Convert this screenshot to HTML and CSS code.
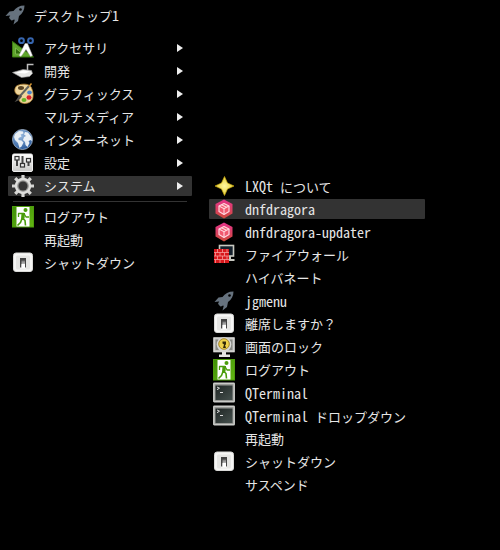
FILE: index.html
```html
<!DOCTYPE html>
<html lang="ja">
<head>
    <meta charset="UTF-8">
    <meta name="viewport" content="width=device-width, initial-scale=1.0">
    <title>デスクトップ1</title>
    <link rel="stylesheet" href="styles.css">
</head>
<body>

    <!-- Icon set -->
    <svg class="icon-set" aria-hidden="true">
        <defs>
            <linearGradient id="metal" x1="0" y1="0" x2="0" y2="1">
                <stop offset="0" stop-color="#ffffff"/>
                <stop offset="1" stop-color="#c9c9c7"/>
            </linearGradient>
            <linearGradient id="pink" x1="0" y1="0" x2="0" y2="1">
                <stop offset="0" stop-color="#e5358b"/>
                <stop offset="1" stop-color="#cf4a3c"/>
            </linearGradient>
            <linearGradient id="green" x1="0" y1="0" x2="1" y2="1">
                <stop offset="0" stop-color="#3f8f06"/>
                <stop offset="1" stop-color="#62b512"/>
            </linearGradient>
            <linearGradient id="knob" x1="0" y1="0" x2="0" y2="1">
                <stop offset="0" stop-color="#777"/>
                <stop offset="1" stop-color="#fff"/>
            </linearGradient>
            <linearGradient id="screen" x1="0" y1="0" x2="1" y2="1">
                <stop offset="0" stop-color="#202625"/>
                <stop offset="1" stop-color="#45504d"/>
            </linearGradient>
            <radialGradient id="sea" cx=".4" cy=".3" r=".7">
                <stop offset="0" stop-color="#9bbce0"/>
                <stop offset="1" stop-color="#2c5c9d"/>
            </radialGradient>
            <radialGradient id="gold">
                <stop offset="0" stop-color="#fff7a0"/>
                <stop offset="1" stop-color="#e3cb32"/>
            </radialGradient>
        </defs>

        <symbol id="rocket" viewBox="0 0 22 22">
            <path fill="#66727e" d="M20.500 1.500c-5 0-8.500 2-11 5.500L5.500 7.500 1.500 12l4.500-.5 1 .7-1.500 2.300 2 2 2.300-1.500.9 1.100L9.500 20.500l4.500-3.500 1-5c3.500-2.500 5.500-6 5.500-10.500z"/>
            <path fill="#66727e" d="M8.500 8l5 5.500-5.500 3-3-3z"/>
            <circle cx="16.500" cy="5.500" r="1.300" fill="#000"/>
        </symbol>

        <symbol id="accessories" viewBox="0 0 22 22">
            <path fill="#5fa52c" stroke="#3b7b10" d="M.5 4.500v15.500h21z"/>
            <path fill="#2f6b0c" stroke="#8fc960" stroke-width=".7" d="M3.500 11v6h7z"/>
            <path fill="#fff" stroke="#aaa" stroke-width=".5" d="M13 6.500h2.500L20.500 18.500l-2 1-4.500-7-5 7-2-1z"/>
            <g fill="none" stroke="#3766b0" stroke-width="2">
                <circle cx="9.500" cy="3.700" r="2.400"/>
                <circle cx="18.500" cy="3.700" r="2.400"/>
            </g>
        </symbol>

        <symbol id="trowel" viewBox="0 0 22 22">
            <path fill="none" stroke="#bdbdbd" stroke-width="1.500" d="M21.500 4.500h-6v6"/>
            <path fill="#e7e7e5" stroke="#999" stroke-width=".6" d="M.5 12.500L11 9.500l8.500 1 1 3-3 3-8 1z"/>
            <path fill="#fff" d="M4 12.700l7.500-2.200 6.500 1-5 2z"/>
        </symbol>

        <symbol id="palette" viewBox="0 0 22 22">
            <path fill="#eed59c" stroke="#b98838" stroke-width=".8" d="M4 3.500C7 .5 17 0 19 4c1.500 3 2.500 6 2 10-.5 5-6 7.500-11 6-4-1.500-3.500-5-2-8-4 .5-7-4-4-8.500z"/>
            <ellipse cx="9" cy="5" rx="3" ry="1.900" fill="#5b4524"/>
            <ellipse cx="17.500" cy="9.500" rx="2.300" ry="2.100" fill="#4b85cb"/>
            <ellipse cx="17" cy="14.500" rx="2.500" ry="2.300" fill="#d8242d"/>
            <ellipse cx="12" cy="17" rx="2.500" ry="2.100" fill="#68b529"/>
            <path stroke="#62645f" stroke-width="2" d="M17 3L8 13"/>
            <path stroke="#d39535" stroke-width="1.500" d="M19.500.5L17 3.500"/>
            <path fill="#55524d" d="M8 11.500l2 2c-2 3-4.500 5-7.500 5.500 2-1.500 3-5 5.500-7.500z"/>
        </symbol>

        <symbol id="globe" viewBox="0 0 22 22">
            <circle cx="10.500" cy="10.500" r="10" fill="url(#sea)" stroke="#a9bed6" stroke-width=".8"/>
            <path fill="#e9eff5" d="M3 5l4-3 4 .5.5 2-3 1 1 2-3 1.500v2l3 .5 2 2-2 4-2 1.500-1.500-5L3 11l-1-3zM13 3l3 .5 3.500 4.500.5 4-1.500-1-2 1 1 2-2 4-2-2-.5-3-2-2 1-3 2-1-2-1.500z"/>
        </symbol>

        <symbol id="sliders" viewBox="0 0 22 22">
            <rect x=".5" y="2" width="20" height="17.500" rx="1.500" fill="url(#metal)" stroke="#eee"/>
            <g fill="none" stroke="#444" stroke-width="2">
                <path d="M5 6v8M10.500 4v8M16.500 8v6"/>
            </g>
            <g fill="#eee" stroke="#333" stroke-width="1.200">
                <rect x="3" y="4.500" width="4" height="3.500"/>
                <rect x="8.500" y="11.500" width="4" height="3.500"/>
                <rect x="14.500" y="6.500" width="4" height="3.500"/>
            </g>
        </symbol>

        <symbol id="gear" viewBox="0 0 22 22">
            <g stroke="#d5d5d3" stroke-width="3.200">
                <path d="M11 0v22M0 11h22M3.200 3.200l15.600 15.600M18.800 3.200L3.200 18.800"/>
            </g>
            <circle cx="11" cy="11" r="8.200" fill="#dededc"/>
            <circle cx="11" cy="11" r="5.800" fill="#929290"/>
            <circle cx="11" cy="11" r="4.500" fill="#353535"/>
        </symbol>

        <symbol id="exit" viewBox="0 0 22 22">
            <rect x=".5" y=".5" width="21" height="20.500" fill="url(#green)" stroke="#4d9b0c"/>
            <path fill="#fff" d="M4.500 1h13v19.500h-13z"/>
            <circle cx="13.500" cy="4" r="2" fill="#4a9d0b"/>
            <path fill="none" stroke="#4a9d0b" stroke-width="1.300" stroke-linejoin="round" d="M6.500 11V7.500H12l2 3.500h3"/>
            <path fill="#4a9d0b" d="M9.500 7h3.500l-.5 5.500-3.500 1z"/>
            <path fill="none" stroke="#4a9d0b" stroke-width="1.600" stroke-linejoin="round" d="M10.500 12l2.500 2.500.5 5M10 12.500L8.500 16.500 5.500 19.500"/>
        </symbol>

        <symbol id="switch" viewBox="0 0 22 22">
            <rect x="1.500" y="1" width="19" height="18.500" rx="2.500" fill="#f6f6f5" stroke="#d9d9d7"/>
            <rect x="4" y="3.500" width="14" height="14" rx="1.500" fill="#e5e5e3"/>
            <rect x="8" y="6" width="6" height="10" fill="#444"/>
            <path fill="url(#knob)" d="M9.500 8.500h3.500V15.500H9.500z"/>
            <path fill="#fff" d="M9.500 12h3.500v3.500H9.500zM8 15.500h6V16.500H8z"/>
        </symbol>

        <symbol id="star" viewBox="0 0 22 22">
            <path fill="url(#gold)" stroke="#c4a60b" stroke-width=".7" d="M11.500 1.500l3 6.500 6.500 3-6.500 3-3 6.500-3-6.500L2 11l6.500-3z"/>
        </symbol>

        <symbol id="cube" viewBox="0 0 22 22">
            <path fill="url(#pink)" d="M11 1.500l8.500 4.500v9.500L11 20.500 2.500 15.500V6z"/>
            <path fill="#f0596f" stroke="#ffd7df" stroke-width="1.200" stroke-linejoin="round" d="M11 5.500l5 2.500v5.500L11 16.500 6 13.500V8z"/>
            <path fill="none" stroke="#ffd7df" stroke-width="1.100" d="M6 8l5 2.700L16 8M11 10.700v5.800M8.500 6.700l5 2.600"/>
        </symbol>

        <symbol id="firewall" viewBox="0 0 22 22">
            <rect x="6.500" y="1.500" width="14" height="10.500" fill="#15202c" stroke="#c8c8c0" stroke-width="1.600"/>
            <path fill="#c8c8c0" d="M14 12h4v3h3.500v2H14z"/>
            <rect x="1" y="5" width="15" height="14" fill="#d8181c"/>
            <path fill="none" stroke="#f69c9c" stroke-width=".8" d="M1 8.500h15M1 12h15M1 15.500h15M4.500 5v3.500M9.500 5v3.500M14 5v3.500M2.500 8.500V12M7 8.500V12M11.500 8.500V12M4.500 12v3.500M9.500 12v3.500M14 12v3.500M2.500 15.500V19M7 15.500V19M11.500 15.500V19"/>
        </symbol>

        <symbol id="lock" viewBox="0 0 22 22">
            <rect x=".8" y="1.800" width="20.400" height="14" fill="#c5c5c2" stroke="#e8e8e6"/>
            <path fill="#858782" d="M2.500 3.500h17V14h-17z"/>
            <path fill="#e4e4e2" d="M9 16h4v2.500h4V21H6v-2.500h3z"/>
            <circle cx="11" cy="8.500" r="7.300" fill="#d8d8d5"/>
            <circle cx="11" cy="8" r="5.300" fill="#edd14b" stroke="#a8882a"/>
            <path fill="#302708" d="M9.500 5.500h3.500v3l-1 .5 1 3h-3l1-3.500-1.500-1z"/>
        </symbol>

        <symbol id="terminal" viewBox="0 0 22 22">
            <rect x=".8" y="1.300" width="20.400" height="18.400" rx=".5" fill="#9a9b98" stroke="#c9cac7" stroke-width="1.500"/>
            <rect x="2.500" y="3.500" width="17" height="14.500" fill="url(#screen)"/>
            <path fill="none" stroke="#ddd" stroke-width="1" d="M4 5l2.500 1.200L4 7.700M7 10.500h3"/>
        </symbol>
    </svg>

    <nav class="desktop-menu" aria-label="デスクトップ1">
        <h1 class="menu-title">
            <svg class="icon"><use href="#rocket"/></svg>
            <span>デスクトップ<span class="latin">1</span></span>
        </h1>

        <ul class="menu">
            <li><button class="item"><svg class="icon"><use href="#accessories"/></svg><span class="label">アクセサリ</span><span class="arrow"></span></button></li>
            <li><button class="item"><svg class="icon"><use href="#trowel"/></svg><span class="label">開発</span><span class="arrow"></span></button></li>
            <li><button class="item"><svg class="icon"><use href="#palette"/></svg><span class="label">グラフィックス</span><span class="arrow"></span></button></li>
            <li><button class="item"><span class="icon"></span><span class="label">マルチメディア</span><span class="arrow"></span></button></li>
            <li><button class="item"><svg class="icon"><use href="#globe"/></svg><span class="label">インターネット</span><span class="arrow"></span></button></li>
            <li><button class="item"><svg class="icon"><use href="#sliders"/></svg><span class="label">設定</span><span class="arrow"></span></button></li>
            <li class="has-submenu">
                <button class="item active" aria-expanded="true"><svg class="icon"><use href="#gear"/></svg><span class="label">システム</span><span class="arrow"></span></button>

                <!-- Opens to the right of its parent item -->
                <ul class="menu submenu">
                    <li><button class="item"><svg class="icon"><use href="#star"/></svg><span class="label"><span class="latin">LXQt </span>について</span></button></li>
                    <li><button class="item active"><svg class="icon"><use href="#cube"/></svg><span class="label latin">dnfdragora</span></button></li>
                    <li><button class="item"><svg class="icon"><use href="#cube"/></svg><span class="label latin">dnfdragora-updater</span></button></li>
                    <li><button class="item"><svg class="icon"><use href="#firewall"/></svg><span class="label">ファイアウォール</span></button></li>
                    <li><button class="item"><span class="icon"></span><span class="label">ハイバネート</span></button></li>
                    <li><button class="item"><svg class="icon"><use href="#rocket"/></svg><span class="label latin">jgmenu</span></button></li>
                    <li><button class="item"><svg class="icon"><use href="#switch"/></svg><span class="label">離席しますか？</span></button></li>
                    <li><button class="item"><svg class="icon"><use href="#lock"/></svg><span class="label">画面のロック</span></button></li>
                    <li><button class="item"><svg class="icon"><use href="#exit"/></svg><span class="label">ログアウト</span></button></li>
                    <li><button class="item"><svg class="icon"><use href="#terminal"/></svg><span class="label latin">QTerminal</span></button></li>
                    <li><button class="item"><svg class="icon"><use href="#terminal"/></svg><span class="label"><span class="latin">QTerminal </span>ドロップダウン</span></button></li>
                    <li><button class="item"><span class="icon"></span><span class="label">再起動</span></button></li>
                    <li><button class="item"><svg class="icon"><use href="#switch"/></svg><span class="label">シャットダウン</span></button></li>
                    <li><button class="item"><span class="icon"></span><span class="label">サスペンド</span></button></li>
                </ul>
            </li>
            <li class="separator" role="separator"></li>
            <li><button class="item"><svg class="icon"><use href="#exit"/></svg><span class="label">ログアウト</span></button></li>
            <li><button class="item"><span class="icon"></span><span class="label">再起動</span></button></li>
            <li><button class="item"><svg class="icon"><use href="#switch"/></svg><span class="label">シャットダウン</span></button></li>
        </ul>
    </nav>

</body>
</html>
```
FILE: styles.css
```css
* {
    margin: 0;
    padding: 0;
    box-sizing: border-box;
}

body {
    background-color: #000;
    color: #e6e6e6;
    font-family: "Noto Sans CJK JP", sans-serif;
    font-size: 13px;
    line-height: 20px;
    min-height: 100vh;
}

.icon-set {
    position: absolute;
    width: 0;
    height: 0;
}

.icon {
    flex: none;
    width: 22px;
    height: 22px;
}

/* Fixed-pitch Latin text */
.latin {
    font-family: "Noto Sans Mono CJK JP", "DejaVu Sans Mono", monospace;
    font-size: 14px;
}

.desktop-menu {
    width: 200px;
    padding: 5px 8px;
}

/* Title row */
.menu-title {
    display: flex;
    align-items: center;
    gap: 8px;
    height: 20px;
    margin-bottom: 13px;
    font-size: 13px;
    font-weight: 400;
}

.menu-title .icon {
    margin-left: -4px;
}

/* Menu lists */
.menu {
    display: flex;
    flex-direction: column;
    gap: 3px;
    list-style: none;
}

.item {
    display: flex;
    align-items: center;
    gap: 10px;
    width: 100%;
    height: 20px;
    padding: 0 9px 0 4px;
    border: none;
    border-radius: 1px;
    background: none;
    color: inherit;
    font: inherit;
    text-align: left;
    white-space: nowrap;
    cursor: pointer;
}

.item:hover,
.item.active {
    background-color: #333;
}

.label {
    flex: 1;
}

.arrow {
    border-left: 6px solid #eee;
    border-top: 4px solid transparent;
    border-bottom: 4px solid transparent;
}

.separator {
    height: 1px;
    margin: 2px 5px;
    background-color: #333;
}

/* Flyout */
.has-submenu {
    position: relative;
}

.submenu {
    position: absolute;
    top: 0;
    left: 100%;
    width: 216px;
    margin-left: 17px;
}
```
